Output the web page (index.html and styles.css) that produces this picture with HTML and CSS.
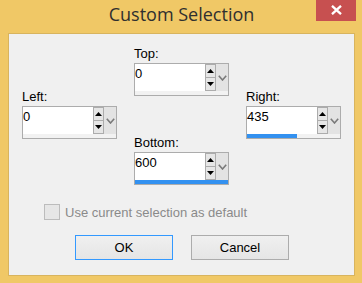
FILE: index.html
```html
<!DOCTYPE html>
<html>
<head>
<meta charset="utf-8">
<link rel="stylesheet" href="styles.css">
</head>
<body>
<div class="window">
  <div class="titlebar">
    <div></div>
    <div class="title">Custom Selection</div>
    <div class="close"><svg width="13" height="10" viewBox="0 0 13 10"><path d="M2 0.8 L11 9.2 M11 0.8 L2 9.2" stroke="#fff" stroke-width="2.3" fill="none"/></svg></div>
  </div>
  <div class="client">
    <div class="fields">
      <div class="col side">
        <div class="group">
          <div class="label">Left:</div>
          <div class="spin"><div class="row"><div class="edit">0</div><div class="arrows"><div class="btn"><svg width="7" height="4" viewBox="0 0 7 4"><path d="M0 4 L3.5 0 L7 4Z" fill="#000"/></svg></div><div class="btn"><svg width="7" height="4" viewBox="0 0 7 4"><path d="M0 0 L3.5 4 L7 0Z" fill="#000"/></svg></div></div><div class="drop"><svg width="9" height="6" viewBox="0 0 9 6"><path d="M0.8 0.8 L4.5 5 L8.2 0.8" stroke="#7a7a7a" stroke-width="1.6" fill="none"/></svg></div></div><div class="bar"></div></div>
        </div>
      </div>
      <div class="col center">
        <div class="group">
          <div class="label">Top:</div>
          <div class="spin"><div class="row"><div class="edit">0</div><div class="arrows"><div class="btn"><svg width="7" height="4" viewBox="0 0 7 4"><path d="M0 4 L3.5 0 L7 4Z" fill="#000"/></svg></div><div class="btn"><svg width="7" height="4" viewBox="0 0 7 4"><path d="M0 0 L3.5 4 L7 0Z" fill="#000"/></svg></div></div><div class="drop"><svg width="9" height="6" viewBox="0 0 9 6"><path d="M0.8 0.8 L4.5 5 L8.2 0.8" stroke="#7a7a7a" stroke-width="1.6" fill="none"/></svg></div></div><div class="bar"></div></div>
        </div>
        <div class="group">
          <div class="label">Bottom:</div>
          <div class="spin"><div class="row"><div class="edit">600</div><div class="arrows"><div class="btn"><svg width="7" height="4" viewBox="0 0 7 4"><path d="M0 4 L3.5 0 L7 4Z" fill="#000"/></svg></div><div class="btn"><svg width="7" height="4" viewBox="0 0 7 4"><path d="M0 0 L3.5 4 L7 0Z" fill="#000"/></svg></div></div><div class="drop"><svg width="9" height="6" viewBox="0 0 9 6"><path d="M0.8 0.8 L4.5 5 L8.2 0.8" stroke="#7a7a7a" stroke-width="1.6" fill="none"/></svg></div></div><div class="bar"><div class="fill" style="width:100%"></div></div></div>
        </div>
      </div>
      <div class="col side">
        <div class="group">
          <div class="label">Right:</div>
          <div class="spin"><div class="row"><div class="edit">435</div><div class="arrows"><div class="btn"><svg width="7" height="4" viewBox="0 0 7 4"><path d="M0 4 L3.5 0 L7 4Z" fill="#000"/></svg></div><div class="btn"><svg width="7" height="4" viewBox="0 0 7 4"><path d="M0 0 L3.5 4 L7 0Z" fill="#000"/></svg></div></div><div class="drop"><svg width="9" height="6" viewBox="0 0 9 6"><path d="M0.8 0.8 L4.5 5 L8.2 0.8" stroke="#7a7a7a" stroke-width="1.6" fill="none"/></svg></div></div><div class="bar"><div class="fill" style="width:54%"></div></div></div>
        </div>
      </div>
    </div>
    <div class="check">
      <div class="box"></div>
      <span>Use current selection as default</span>
    </div>
    <div class="buttons">
      <div class="button default">OK</div>
      <div class="button">Cancel</div>
    </div>
  </div>
</div>
</body>
</html>
```
FILE: styles.css
```css
* { box-sizing: border-box; }
html, body { margin: 0; padding: 0; }
body {
  width: 362px;
  height: 283px;
  overflow: hidden;
  background: #f0c866;
  font-family: "Liberation Sans", Arial, sans-serif;
  font-size: 13px;
  color: #000;
}
.window {
  display: flex;
  flex-direction: column;
  height: 283px;
}
.titlebar {
  height: 33px;
  display: grid;
  grid-template-columns: 1fr auto 1fr;
  align-items: start;
}
.title {
  font-family: "Open Sans", "Noto Sans", sans-serif;
  font-size: 18px;
  color: #2f2f2f;
  line-height: 20px;
  padding-top: 4px;
  padding-left: 1px;
}
.close {
  justify-self: end;
  margin-right: 6px;
  width: 40px;
  height: 21px;
  background: #c75050;
  display: flex;
  align-items: center;
  justify-content: center;
  padding-bottom: 1px;
}
.close svg { display: block; }
.client {
  flex: 1;
  margin: 0 7px 7px 8px;
  border: 1px solid #d8b45e;
  background: #f0f0f0;
}
.fields {
  display: flex;
  gap: 17px;
  padding: 13px 0 0 13px;
}
.col {
  display: flex;
  flex-direction: column;
  width: 95px;
}
.col.side { padding-top: 43px; }
.col.center { gap: 40px; }
.label {
  line-height: 14px;
  height: 14px;
  margin-bottom: 2px;
  white-space: nowrap;
}
.spin {
  width: 95px;
  height: 33px;
  border: 1px solid #acacac;
  background: #fff;
  display: flex;
  flex-direction: column;
}
.row {
  display: flex;
  height: 27px;
}
.edit {
  flex: 1;
  line-height: 15px;
  padding-top: 2px;
  padding-left: 0;
}
.arrows {
  width: 11px;
  display: flex;
  flex-direction: column;
}
.btn {
  flex: 1;
  background: #e6e6e6;
  border: 1px solid #acacac;
  display: flex;
  align-items: center;
  justify-content: center;
}
.btn + .btn { border-top: none; }
.btn svg, .drop svg { display: block; }
.drop {
  width: 12px;
  background: #e3e3e3;
  display: flex;
  align-items: center;
  justify-content: center;
  padding-top: 1px;
}
.bar {
  height: 4px;
  background: #f2f2f2;
  display: flex;
}
.fill {
  height: 4px;
  background: #3391f0;
}
.check {
  display: flex;
  align-items: center;
  margin: 19px 0 0 35px;
  height: 16px;
}
.box {
  width: 16px;
  height: 16px;
  border: 1px solid #bcbcbc;
  background: #e6e6e6;
}
.check span {
  margin-left: 5px;
  color: #8a8a8a;
}
.buttons {
  display: flex;
  justify-content: center;
  gap: 18px;
  margin-top: 15px;
  padding-left: 1px;
}
.button {
  width: 98px;
  height: 25px;
  border: 1px solid #acacac;
  background: linear-gradient(#f0f0f0, #e5e5e5);
  display: flex;
  align-items: center;
  justify-content: center;
}
.button.default { border-color: #3399ff; }
```
